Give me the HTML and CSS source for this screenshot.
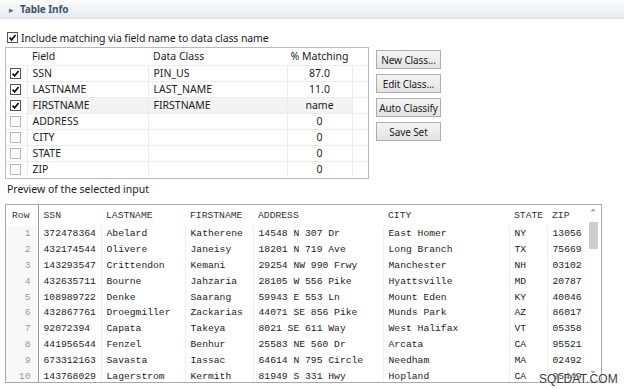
FILE: index.html
```html
<!DOCTYPE html>
<html>
<head>
<meta charset="utf-8">
<link rel="stylesheet" href="styles.css">
</head>
<body>
<div class="page">
  <div class="section-header"><span class="twisty">&#9656;</span><span class="section-title">Table Info</span></div>
  <div class="content">
    <label class="include-row"><span class="cb cb-small checked"><svg viewBox="0 0 10 10"><path d="M1.8 5.2 L4 7.6 L8.4 2.2" /></svg></span>Include matching via field name to data class name</label>
    <div class="top">
      <div class="field-box">
        <table class="field-table">
          <colgroup><col class="c-cb"><col class="c-field"><col class="c-class"><col class="c-match"><col class="c-rest"></colgroup>
          <thead><tr><th></th><th>Field</th><th>Data Class</th><th class="center">% Matching</th><th></th></tr></thead>
          <tbody>
            <tr><td><span class="cb checked"><svg viewBox="0 0 10 10"><path d="M1.8 5.2 L4 7.6 L8.4 2.2" /></svg></span></td><td>SSN</td><td>PIN_US</td><td class="center">87.0</td><td></td></tr>
            <tr><td><span class="cb checked"><svg viewBox="0 0 10 10"><path d="M1.8 5.2 L4 7.6 L8.4 2.2" /></svg></span></td><td>LASTNAME</td><td>LAST_NAME</td><td class="center">11.0</td><td></td></tr>
            <tr class="sel"><td><span class="cb checked"><svg viewBox="0 0 10 10"><path d="M1.8 5.2 L4 7.6 L8.4 2.2" /></svg></span></td><td>FIRSTNAME</td><td>FIRSTNAME</td><td class="center">name</td><td class="plain"></td></tr>
            <tr><td><span class="cb"></span></td><td>ADDRESS</td><td></td><td class="center">0</td><td></td></tr>
            <tr><td><span class="cb"></span></td><td>CITY</td><td></td><td class="center">0</td><td></td></tr>
            <tr><td><span class="cb"></span></td><td>STATE</td><td></td><td class="center">0</td><td></td></tr>
            <tr><td><span class="cb"></span></td><td>ZIP</td><td></td><td class="center">0</td><td></td></tr>
          </tbody>
        </table>
      </div>
      <div class="buttons">
        <button class="btn">New Class...</button>
        <button class="btn">Edit Class...</button>
        <button class="btn">Auto Classify</button>
        <button class="btn">Save Set</button>
      </div>
    </div>
    <div class="preview-label">Preview of the selected input</div>
    <div class="preview">
      <div class="preview-scroll">
        <table class="data-table">
          <colgroup><col class="d-row"><col class="d-ssn"><col class="d-last"><col class="d-first"><col class="d-addr"><col class="d-city"><col class="d-state"><col class="d-zip"></colgroup>
          <thead><tr><th class="rownum">Row</th><th>SSN</th><th>LASTNAME</th><th>FIRSTNAME</th><th>ADDRESS</th><th>CITY</th><th>STATE</th><th>ZIP</th></tr></thead>
          <tbody>
            <tr><td class="rownum">1</td><td>372478364</td><td>Abelard</td><td>Katherene</td><td>14548 N 307 Dr</td><td>East Homer</td><td>NY</td><td>13056</td></tr>
            <tr><td class="rownum">2</td><td>432174544</td><td>Olivere</td><td>Janeisy</td><td>18201 N 719 Ave</td><td>Long Branch</td><td>TX</td><td>75669</td></tr>
            <tr><td class="rownum">3</td><td>143293547</td><td>Crittendon</td><td>Kemani</td><td>29254 NW 990 Frwy</td><td>Manchester</td><td>NH</td><td>03102</td></tr>
            <tr><td class="rownum">4</td><td>432635711</td><td>Bourne</td><td>Jahzaria</td><td>28105 W 556 Pike</td><td>Hyattsville</td><td>MD</td><td>20787</td></tr>
            <tr><td class="rownum">5</td><td>108989722</td><td>Denke</td><td>Saarang</td><td>59943 E 553 Ln</td><td>Mount Eden</td><td>KY</td><td>40046</td></tr>
            <tr><td class="rownum">6</td><td>432867761</td><td>Droegmiller</td><td>Zackarias</td><td>44071 SE 856 Pike</td><td>Munds Park</td><td>AZ</td><td>86017</td></tr>
            <tr><td class="rownum">7</td><td>92072394</td><td>Capata</td><td>Takeya</td><td>8021 SE 611 Way</td><td>West Halifax</td><td>VT</td><td>05358</td></tr>
            <tr><td class="rownum">8</td><td>441956544</td><td>Fenzel</td><td>Benhur</td><td>25583 NE 560 Dr</td><td>Arcata</td><td>CA</td><td>95521</td></tr>
            <tr><td class="rownum">9</td><td>673312163</td><td>Savasta</td><td>Iassac</td><td>64614 N 795 Circle</td><td>Needham</td><td>MA</td><td>02492</td></tr>
            <tr><td class="rownum">10</td><td>143768029</td><td>Lagerstrom</td><td>Kermith</td><td>81949 S 331 Hwy</td><td>Hopland</td><td>CA</td><td>95449</td></tr>
          </tbody>
        </table>
      </div>
      <div class="vscroll">
        <span class="arrow up">&#8963;</span>
        <span class="thumb"></span>
        <span class="track"></span>
        <span class="arrow down">&#8964;</span>
      </div>
    </div>
  </div>
  <div class="watermark">SQLDAT.COM</div>
</div>
</body>
</html>
```

FILE: styles.css
```css
* { box-sizing: border-box; }
html, body { margin: 0; padding: 0; background: #fff; }
body { width: 624px; height: 389px; overflow: hidden; font-family: "Noto Sans", "Open Sans", sans-serif; font-size: 10.5px; color: #222; }
.page { position: relative; width: 624px; height: 389px; }

.section-header {
  height: 19px;
  display: flex;
  align-items: center;
  padding-left: 9px;
  background: linear-gradient(#fbfcfd, #e6ebf1);
  border-bottom: 1px solid #dde3ea;
}
.twisty { font-size: 9px; color: #5a6e88; margin-right: 6px; line-height: 1; }
.section-title { font-weight: bold; color: #3b5576; font-size: 10px; letter-spacing: -0.1px; }

.content { padding: 0 5px; }

.include-row {
  display: flex;
  align-items: center;
  height: 15px;
  margin-top: 11px;
  margin-left: 2px;
  color: #222;
  letter-spacing: -0.1px;
}

.cb {
  display: inline-block;
  width: 11px;
  height: 11px;
  border: 1px solid #b8b8b8;
  background: #fff;
  position: relative;
}
.cb.checked { border-color: #555; }
.cb svg { position: absolute; left: 0; top: 0; width: 9px; height: 9px; }
.cb svg path { fill: none; stroke: #111; stroke-width: 1.9; }
.cb-small { width: 11px; height: 11px; margin-right: 3px; border-color: #666; }

.top { display: flex; align-items: flex-start; margin-top: 2px; }

.field-box {
  width: 364px;
  height: 132px;
  border: 1px solid #b9b9b9;
  overflow: hidden;
}
.field-table { border-collapse: collapse; table-layout: fixed; width: 362px; }
.c-cb { width: 21px; }
.c-field { width: 121px; }
.c-class { width: 139px; }
.c-match { width: 65px; }
.c-rest { width: 16px; }
.field-table th {
  height: 17px;
  font-weight: normal;
  text-align: left;
  padding: 0 0 0 5px;
  color: #222;
  white-space: nowrap;
}
.field-table th.center { text-align: center; padding: 0; }
.field-table td {
  height: 16px;
  padding: 0 0 0 5px;
  border-top: 1px solid #ececec;
  border-left: 1px solid #ececec;
  white-space: nowrap;
  line-height: 14px;
}
.field-table td:first-child { border-left: none; padding: 0 0 0 4px; vertical-align: middle; }
.field-table td:first-child .cb { display: block; margin-top: 1px; }
.field-table td.center { text-align: center; padding: 0; }
.field-table tr.sel td:nth-child(2),
.field-table tr.sel td:nth-child(3),
.field-table tr.sel td:nth-child(4) { background: #f3f3f3; }

.buttons { display: flex; flex-direction: column; gap: 5px; margin-left: 7px; margin-top: 3px; }
.btn {
  width: 65px;
  height: 19px;
  padding: 0;
  font-family: "Noto Sans", "Open Sans", sans-serif;
  font-size: 10px;
  color: #222;
  background: linear-gradient(#f4f4f4, #e3e3e3);
  border: 1px solid #adadad;
  border-radius: 0;
  letter-spacing: -0.1px;
}

.preview-label { margin-top: 3px; margin-left: 2px; height: 15px; line-height: 15px; }

.preview {
  display: flex;
  width: 597px;
  height: 179px;
  margin-top: 7px;
  border: 1px solid #a9a9a9;
  overflow: hidden;
}
.preview-scroll { flex: 1; overflow: hidden; }
.data-table {
  border-collapse: collapse;
  table-layout: fixed;
  width: 579px;
  font-family: "Liberation Mono", "DejaVu Sans Mono", monospace;
  font-size: 9.7px;
  color: #222;
}
.d-row { width: 32px; }
.d-ssn { width: 63px; }
.d-last { width: 84px; }
.d-first { width: 68px; }
.d-addr { width: 130px; }
.d-city { width: 126px; }
.d-state { width: 38px; }
.d-zip { width: 38px; }
.data-table th {
  height: 21px;
  font-weight: normal;
  text-align: left;
  padding: 0 0 0 5px;
  color: #333;
  white-space: nowrap;
}
.data-table td {
  height: 15.8px;
  padding: 0 0 0 5px;
  border-left: 1px solid #efefef;
  white-space: nowrap;
  overflow: hidden;
}
.data-table th.rownum { text-align: left; padding-left: 6px; border-right: 1px solid #9a9a9a; }
.data-table td.rownum {
  text-align: right;
  padding: 0 7px 0 0;
  color: #999;
  background: #f8f8f8;
  border-left: none;
  border-right: 1px solid #9a9a9a;
}
.data-table td.rownum + td { border-left: none; }

.vscroll {
  width: 16px;
  display: flex;
  flex-direction: column;
  align-items: center;
  background: #fff;
}
.arrow { font-size: 9px; color: #555; line-height: 1; height: 11px; display: flex; align-items: center; justify-content: center; font-family: "DejaVu Sans", sans-serif; }
.arrow.up { margin-top: 2px; align-items: flex-end; }
.thumb { width: 9px; height: 27px; background: #cdcdcd; margin-top: 4px; }
.track { flex: 1; }
.arrow.down { margin-bottom: 6px; }

.watermark {
  position: absolute;
  right: 6px;
  bottom: 3px;
  font-family: "Liberation Sans", "Noto Sans", sans-serif;
  font-size: 12px;
  color: #3a3a3a;
  letter-spacing: 0.2px;
  text-shadow: 0 0 2px #fff, 0 0 2px #fff;
}
```
